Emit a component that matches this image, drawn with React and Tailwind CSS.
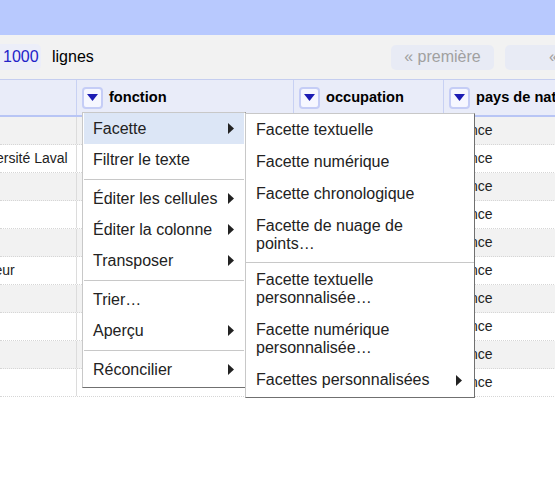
import React from "react";

const rows = [
  { a: "", d: "France" },
  { a: "Université Laval", d: "France" },
  { a: "", d: "France" },
  { a: "", d: "France" },
  { a: "", d: "France" },
  { a: "Lecteur", d: "France" },
  { a: "", d: "France" },
  { a: "", d: "France" },
  { a: "", d: "France" },
  { a: "", d: "France" },
];

function Arrow() {
  return (
    <svg width="6" height="11" viewBox="0 0 6 11" className="shrink-0">
      <polygon points="0,0 6,5.5 0,11" fill="#222" />
    </svg>
  );
}

function DropButton() {
  return (
    <div className="w-[21px] h-[22px] shrink-0 rounded-[4px] border-2 border-[#c5cdf6] bg-[#f6f7ff] flex items-center justify-center">
      <svg width="11" height="7" viewBox="0 0 11 7">
        <polygon points="0,0 11,0 5.5,7" fill="#1c1cb4" />
      </svg>
    </div>
  );
}

function HeaderCell({ label, className }) {
  return (
    <div className={"h-full flex items-center gap-[6px] pl-[5px] border-r border-[#c8d1f3] " + className}>
      <DropButton />
      <span className="font-bold text-[14.6px] text-black whitespace-nowrap">{label}</span>
    </div>
  );
}

function Sep() {
  return (
    <div className="h-[8px] flex items-center">
      <div className="h-px w-full bg-[#c8c8c8]" />
    </div>
  );
}

function MainItem({ label, arrow, active }) {
  return (
    <div className={"h-[31px] flex items-center justify-between pl-[9px] pr-[10px] " + (active ? "bg-[#dce6f6]" : "")}>
      <span className="whitespace-nowrap">{label}</span>
      {arrow && <Arrow />}
    </div>
  );
}

function SubItem({ label, arrow }) {
  return (
    <div className="flex items-center justify-between pl-[10px] pr-[12px] py-[7px] leading-[18px]">
      <span className="max-w-[192px]">{label}</span>
      {arrow && <Arrow />}
    </div>
  );
}

export default function App() {
  return (
    <div className="relative w-[555px] h-[493px] overflow-hidden bg-white font-['Liberation_Sans',Arial,sans-serif] text-[#222]">
      <div className="h-[35px] bg-[#b8c9fe]" />

      <div className="h-[44px] bg-[#f2f2f2] flex items-center">
        <div className="w-[391px] shrink-0 flex items-center gap-[11px] text-[16px]">
          <span className="h-[26px] w-[41px] flex items-center pl-[3px] rounded-r-[5px] bg-[#eceef9] text-[#2323c8]">1000</span>
          <span className="text-black">lignes</span>
        </div>
        <div className="flex items-center gap-[11px] text-[16px] text-[#a0a0a0]">
          <span className="h-[25px] w-[103px] shrink-0 flex items-center justify-center rounded-[5px] bg-[#e8ebf5] whitespace-nowrap">« première</span>
          <span className="h-[25px] w-[120px] shrink-0 flex items-center pl-[44px] rounded-[5px] bg-[#e8ebf5] whitespace-nowrap">« précédente</span>
        </div>
      </div>

      <div className="w-[700px]">
        <div className="h-[38px] flex bg-[#e9ecf9] border-t border-b-2 border-t-[#c5cef0] border-b-[#b8c5f5]">
          <div className="w-[77px] h-full border-r border-[#c8d1f3] shrink-0" />
          <HeaderCell label="fonction" className="w-[217px] shrink-0" />
          <HeaderCell label="occupation" className="w-[150px] shrink-0" />
          <HeaderCell label="pays de nationalité" className="w-[200px] shrink-0" />
        </div>

        {rows.map((r, i) => (
          <div key={i} className={"h-[28px] flex text-[14px] border-b border-dotted border-[#d6d6d6] " + (i % 2 === 0 ? "bg-[#f2f2f2]" : "bg-white")}>
            <div className="w-[77px] shrink-0 border-r border-[#dcdcdc] overflow-hidden flex items-center">
              <span className="-ml-[32px] whitespace-nowrap">{r.a}</span>
            </div>
            <div className="w-[217px] shrink-0" />
            <div className="w-[150px] shrink-0" />
            <div className="w-[200px] shrink-0 flex items-center pl-[5px]">
              <span className="whitespace-nowrap">{r.d}</span>
            </div>
          </div>
        ))}
      </div>

      <div className="absolute left-[82px] top-[112px] w-[164px] bg-white border border-[#c8c8c8] border-b-[#707070] border-r-[#707070] px-px pb-[2px] text-[16px]">
        <MainItem label="Facette" arrow active />
        <MainItem label="Filtrer le texte" />
        <Sep />
        <MainItem label="Éditer les cellules" arrow />
        <MainItem label="Éditer la colonne" arrow />
        <MainItem label="Transposer" arrow />
        <Sep />
        <MainItem label="Trier…" />
        <MainItem label="Aperçu" arrow />
        <Sep />
        <MainItem label="Réconcilier" arrow />
      </div>

      <div className="absolute left-[245px] top-[113px] w-[230px] bg-white border border-[#c8c8c8] border-b-[#707070] border-r-[#707070] pb-px text-[16px]">
        <SubItem label="Facette textuelle" />
        <SubItem label="Facette numérique" />
        <SubItem label="Facette chronologique" />
        <SubItem label="Facette de nuage de points…" />
        <div className="h-[4px] flex items-center">
          <div className="h-px w-full bg-[#c8c8c8]" />
        </div>
        <SubItem label="Facette textuelle personnalisée…" />
        <SubItem label="Facette numérique personnalisée…" />
        <SubItem label="Facettes personnalisées" arrow />
      </div>
    </div>
  );
}
